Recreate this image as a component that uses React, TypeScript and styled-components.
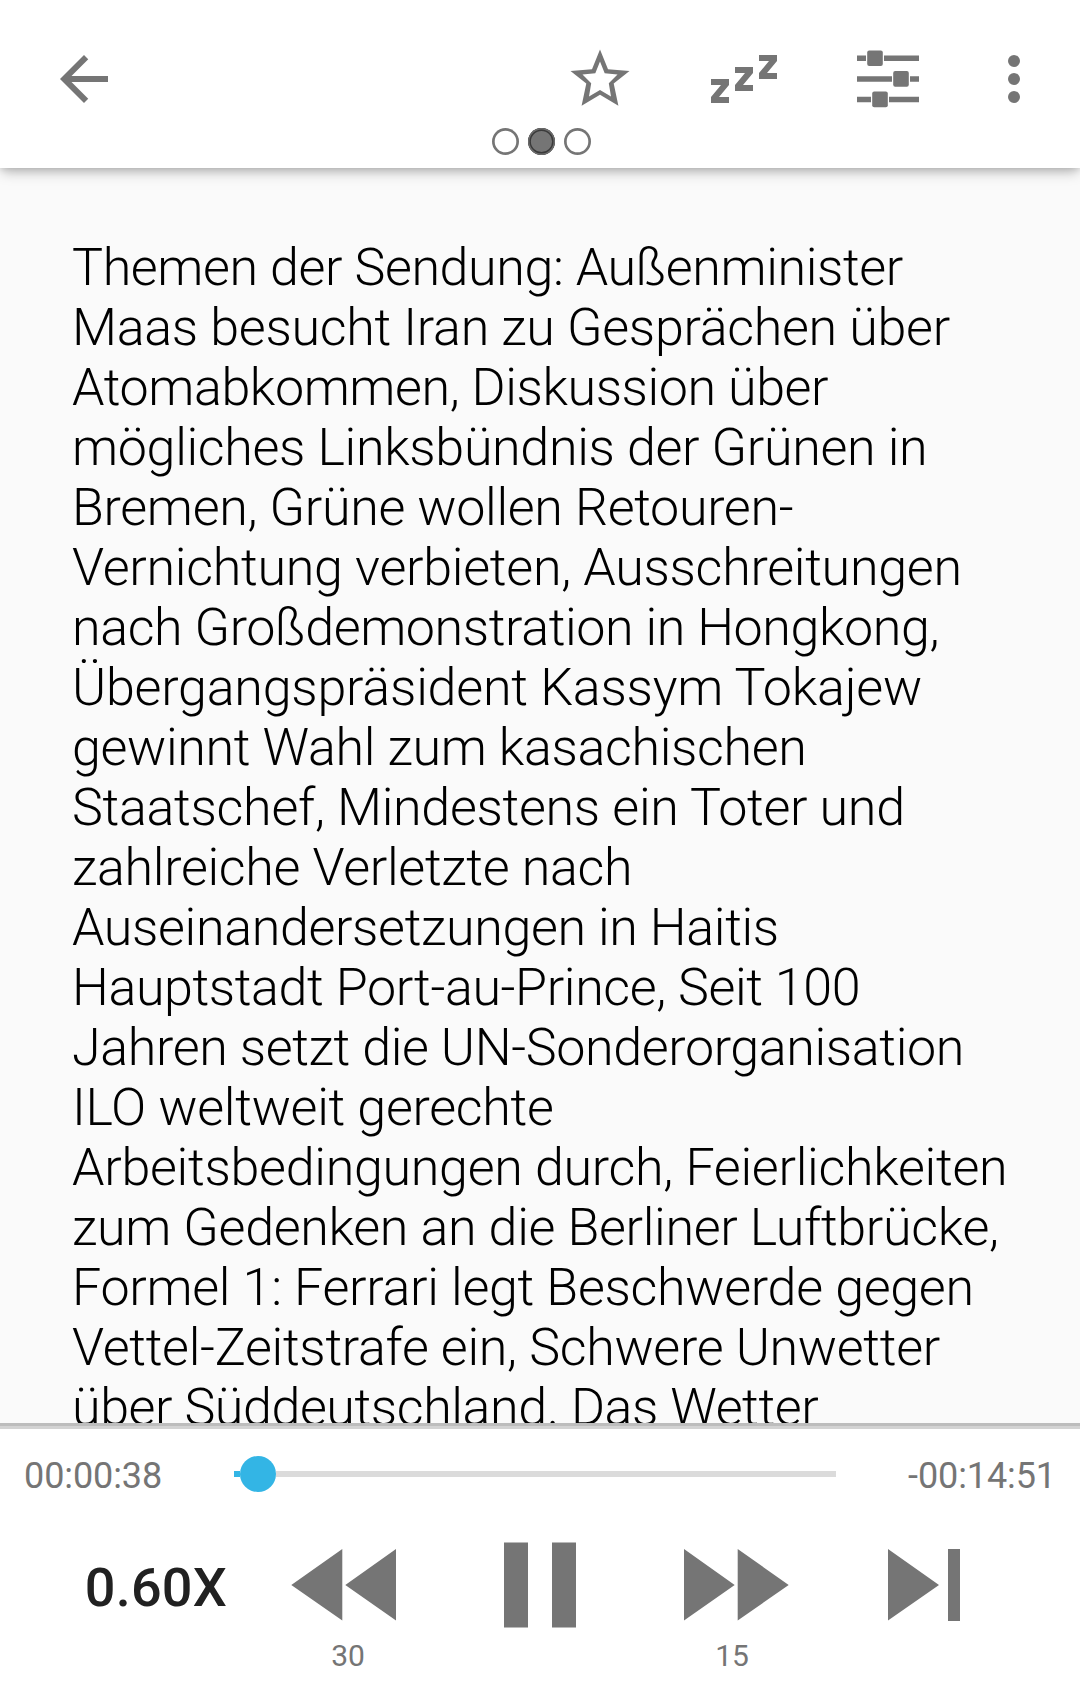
import React from "react";
import styled, { createGlobalStyle } from "styled-components";

const Global = createGlobalStyle`
  * { box-sizing: border-box; }
  body { margin: 0; background: #fff; }
`;

const Screen = styled.div`
  width: 1080px;
  height: 1699px;
  display: flex;
  flex-direction: column;
  overflow: hidden;
  background: #fafafa;
  font-family: Roboto, "Liberation Sans", sans-serif;
`;

const Header = styled.header`
  flex: none;
  height: 168px;
  background: #fff;
  z-index: 1;
  box-shadow: 0 6px 12px -2px rgba(0, 0, 0, 0.26), 0 1px 7px rgba(0, 0, 0, 0.12);
`;

const Toolbar = styled.div`
  display: flex;
  align-items: center;
  height: 84px;
  margin-top: 37px;
  padding: 0 30px 0 48px;
`;

const IconButton = styled.button<{ $gap?: number }>`
  display: flex;
  padding: 0;
  border: 0;
  background: none;
  color: #757575;
  margin-left: ${(p) => p.$gap ?? 0}px;
  svg { display: block; fill: currentColor; }
`;

const Spacer = styled.div`
  flex: 1;
`;

const Pager = styled.div`
  display: flex;
  justify-content: center;
  gap: 9px;
  padding: 7px 0 0 3px;
`;

const Dot = styled.span<{ $active?: boolean }>`
  width: 27px;
  height: 27px;
  border-radius: 50%;
  background: ${(p) => (p.$active ? "#757575" : "transparent")};
  box-shadow: ${(p) =>
    p.$active
      ? "inset 0 0 0 1.5px #6c6c6c, inset 0 0 0 2.9px #3a3a3a"
      : "inset 0 0 0 2.7px #757575"};
`;

const Description = styled.main`
  flex: 1;
  min-height: 0;
  overflow: hidden;
  padding: 70px 72px 0;
`;

const Paragraph = styled.p`
  margin: 0;
  font-size: 52px;
  font-weight: 300;
  line-height: 60px;
  color: #000;
  white-space: nowrap;
`;

const Line = styled.span<{ $tracking: number }>`
  display: block;
  letter-spacing: ${(p) => p.$tracking}px;
`;

const Player = styled.footer`
  flex: none;
  height: 276px;
  background: #fff;
  border-top: 3px solid #bdbdbd;
`;

const Edge = styled.div`
  height: 3px;
  background: #d3d3d3;
`;

const SeekRow = styled.div`
  display: flex;
  align-items: center;
  height: 90px;
  padding: 0 24px;
`;

const Time = styled.span<{ $right?: boolean }>`
  width: 210px;
  font-size: 36px;
  line-height: 42px;
  padding-top: 3px;
  letter-spacing: -0.1px;
  color: #757575;
  text-align: ${(p) => (p.$right ? "right" : "left")};
`;

const Track = styled.div`
  flex: 1;
  display: flex;
  align-items: center;
  height: 36px;
  margin-right: 10px;
`;

const Played = styled.div`
  width: 6px;
  height: 6px;
  background: #33b5e5;
`;

const Thumb = styled.div`
  width: 36px;
  height: 36px;
  border-radius: 50%;
  background: #33b5e5;
`;

const Remaining = styled.div`
  flex: 1;
  height: 6px;
  background: #dbdbdb;
`;

const Controls = styled.div`
  display: grid;
  grid-template-columns: 252px 192px 192px 192px 192px;
  grid-template-rows: 88px 52px;
  padding-top: 22px;
  align-items: center;
  justify-items: center;
`;

const Speed = styled.span`
  justify-self: end;
  margin-right: 25px;
  font-size: 54px;
  line-height: 60px;
  padding-top: 6px;
  font-weight: 500;
  letter-spacing: 0.2px;
  color: #212121;
`;

const Seconds = styled.span<{ $column: number }>`
  grid-column: ${(p) => p.$column};
  grid-row: 2;
  font-size: 30px;
  line-height: 36px;
  padding-top: 2px;
  color: #757575;
`;

const lines: [string, number][] = [
  ["Themen der Sendung: Außenminister", -0.39],
  ["Maas besucht Iran zu Gesprächen über", -0.3],
  ["Atomabkommen, Diskussion über", -0.41],
  ["mögliches Linksbündnis der Grünen in", -0.33],
  ["Bremen, Grüne wollen Retouren-", -0.325],
  ["Vernichtung verbieten, Ausschreitungen", -0.285],
  ["nach Großdemonstration in Hongkong,", -0.4],
  ["Übergangspräsident Kassym Tokajew", -0.23],
  ["gewinnt Wahl zum kasachischen", -0.336],
  ["Staatschef, Mindestens ein Toter und", -0.3],
  ["zahlreiche Verletzte nach", -0.316],
  ["Auseinandersetzungen in Haitis", -0.36],
  ["Hauptstadt Port-au-Prince, Seit 100", -0.4],
  ["Jahren setzt die UN-Sonderorganisation", -0.37],
  ["ILO weltweit gerechte", -0.3],
  ["Arbeitsbedingungen durch, Feierlichkeiten", -0.29],
  ["zum Gedenken an die Berliner Luftbrücke,", -0.325],
  ["Formel 1: Ferrari legt Beschwerde gegen", -0.305],
  ["Vettel-Zeitstrafe ein, Schwere Unwetter", -0.305],
  ["über Süddeutschland. Das Wetter", -0.42],
];

export default function App() {
  return (
    <>
      <Global />
      <Screen>
        <Header>
          <Toolbar>
            <IconButton aria-label="Back">
              <svg width="72" height="72" viewBox="0 0 24 24">
                <path d="M20 11H7.83l5.59-5.59L12 4l-8 8 8 8 1.41-1.41L7.83 13H20v-2z" />
              </svg>
            </IconButton>
            <Spacer />
            <IconButton aria-label="Favorite">
              <svg width="60" height="60" viewBox="570 49 60 60">
                <path
                  fillRule="evenodd"
                  d="M600 49.5 608 69.3 629.5 71 613.7 83.5 618.4 105.7 600 94.7 581.6 105.7 586.3 83.5 570.5 71 592 69.3ZM600 61.5 595.3 73.3 582.5 74.5 591.2 83.3 589 96.5 600 90 611 96.5 608.8 83.3 617.5 74.5 604.7 73.3Z"
                />
              </svg>
            </IconButton>
            <IconButton $gap={81} aria-label="Sleep timer">
              <svg width="66" height="48" viewBox="0 0 66 48">
                <path d="M0 24h18v6L8 42h10v6H0v-6l10-12H0z" />
                <path d="M24 12h18v6L32 30h10v6H24v-6l10-12H24z" />
                <path d="M48 0h18v6L56 18h10v6H48v-6L58 6H48z" />
              </svg>
            </IconButton>
            <IconButton $gap={79} aria-label="Audio controls">
              <svg width="64" height="58" viewBox="856 50 64 58">
                <path d="M857 55.5h9v5.5h-9zM884 55.5h35v5.5h-35zM857 76.2h35v5.5h-35zM910 76.2h9v5.5h-9zM857 96.8h14v5.5h-14zM889 96.8h30v5.5h-30z" />
                <rect x="867.2" y="50.4" width="15.6" height="15.6" rx="2" />
                <rect x="893.2" y="71.1" width="15.6" height="15.6" rx="2" />
                <rect x="872.2" y="91.6" width="15.6" height="15.6" rx="2" />
              </svg>
            </IconButton>
            <IconButton $gap={58} aria-label="More options">
              <svg width="72" height="72" viewBox="0 0 24 24">
                <circle cx="12" cy="6" r="2" />
                <circle cx="12" cy="12" r="2" />
                <circle cx="12" cy="18" r="2" />
              </svg>
            </IconButton>
          </Toolbar>
          <Pager>
            <Dot />
            <Dot $active />
            <Dot />
          </Pager>
        </Header>
        <Description>
          <Paragraph>
            {lines.map(([text, tracking]) => (
              <Line key={text} $tracking={tracking}>
                {text}
              </Line>
            ))}
          </Paragraph>
        </Description>
        <Player>
          <Edge />
          <SeekRow>
            <Time>00:00:38</Time>
            <Track>
              <Played />
              <Thumb />
              <Remaining />
            </Track>
            <Time $right>-00:14:51</Time>
          </SeekRow>
          <Controls>
            <Speed>0.60X</Speed>
            <IconButton aria-label="Rewind">
              <svg width="114" height="86" viewBox="291 1542 114 86">
                <path d="M342.3 1549v71.5L291.3 1585zM396 1549v71.5L345.3 1585z" />
              </svg>
            </IconButton>
            <IconButton aria-label="Pause">
              <svg width="72" height="86" viewBox="504 1542 72 86">
                <path d="M504 1542.5h24v85h-24zM552 1542.5h24v85h-24z" />
              </svg>
            </IconButton>
            <IconButton aria-label="Fast forward">
              <svg width="114" height="86" viewBox="675 1542 114 86">
                <path d="M684 1549v71.5l50.7-35.5zM737.7 1549v71.5l51-35.5z" />
              </svg>
            </IconButton>
            <IconButton aria-label="Next">
              <svg width="72" height="86" viewBox="888 1542 72 86">
                <path d="M888 1549v71.5l51-35.5zM948 1549h12v72h-12z" />
              </svg>
            </IconButton>
            <Seconds $column={2}>30</Seconds>
            <Seconds $column={4}>15</Seconds>
          </Controls>
        </Player>
      </Screen>
    </>
  );
}
